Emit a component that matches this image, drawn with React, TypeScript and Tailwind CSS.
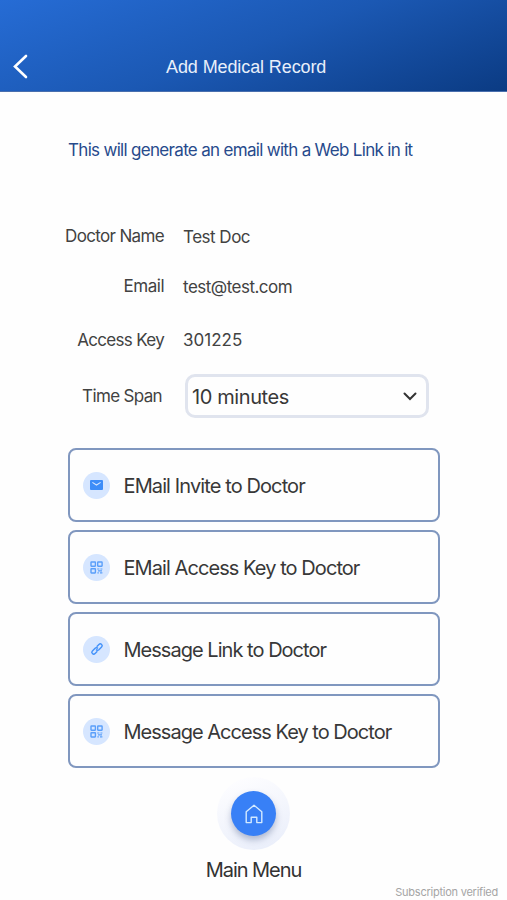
import React from "react";

interface FieldProps {
  label: React.ReactNode;
  className?: string;
  labelClass?: string;
  children?: React.ReactNode;
}

function Field({ label, className = "", labelClass = "", children }: FieldProps) {
  return (
    <div className={`${className} flex items-center`}>
      <p className={`${labelClass} text-right text-[17px] text-[#424242]`}>{label}</p>
      {children}
    </div>
  );
}

interface ActionProps {
  icon: React.ReactNode;
  text: string;
  className?: string;
}

function ActionButton({ icon, text, className = "" }: ActionProps) {
  return (
    <button className="flex h-[74px] w-full items-center rounded-lg border-2 border-[#8097bf] pl-[13px] text-left">
      <span className="flex h-[27px] w-[27px] items-center justify-center rounded-full bg-[#d6e6ff]">{icon}</span>
      <span className={`${className} ml-[13.5px] pt-0.5 text-[20px] whitespace-nowrap text-[#383838]`}>{text}</span>
    </button>
  );
}

function MailIcon() {
  return (
    <svg width="13" height="10" viewBox="0 0 13 10" fill="none">
      <rect width="13" height="10" rx="1" fill="#3d8df8" />
      <path d="M2.4 2.4 6.5 5l4.1-2.6" stroke="#d6e6ff" strokeWidth="1.1" />
    </svg>
  );
}

function QrIcon() {
  return (
    <svg width="13" height="13" viewBox="0 0 13 13" fill="none" stroke="#5a9ffa" strokeWidth="1.4">
      <rect x="1" y="1" width="4.4" height="4.2" rx="0.4" />
      <rect x="7.7" y="1" width="4.4" height="4.2" rx="0.4" />
      <rect x="1" y="7.8" width="4.4" height="4.2" rx="0.4" />
      <path d="M7.2 8h2.2M10.4 8h2M8 9.9h4M7.4 11.9h1.4M10 11.9h2.4" strokeWidth="1.2" />
    </svg>
  );
}

function LinkIcon() {
  return (
    <svg width="16" height="16" viewBox="0 0 16 16" fill="none" stroke="#4392fa" strokeWidth="1.4">
      <g transform="rotate(-45 8 8)">
        <path d="M6.6 9.9H3.4a1.9 1.9 0 0 1 0-3.8h3.8a1.9 1.9 0 0 1 1.8 2.2" />
        <path d="M9.4 6.1h3.2a1.9 1.9 0 0 1 0 3.8H8.8A1.9 1.9 0 0 1 7 7.7" />
      </g>
    </svg>
  );
}

export default function App() {
  return (
    <div className="flex h-[900px] w-[507px] flex-col overflow-hidden bg-[#fefefe] font-['Inter',sans-serif]">
      <header className="flex h-[92px] shrink-0 items-end border-b border-[#496fae] bg-[linear-gradient(160deg,#266cd5_0%,#1b58b3_50%,#0b3b83_100%)] pb-3 pl-[13px]">
        <svg width="15" height="25" viewBox="0 0 15 25" fill="none" stroke="#fff" strokeWidth="2.6" strokeLinecap="round">
          <path d="M13 2 2 12.5 13 23" />
        </svg>
        <h1 className="-mb-0.5 ml-[138px] font-['Liberation_Sans',sans-serif] text-[18px] leading-[27px] tracking-[-0.1px] text-[#e8effa]">
          Add Medical Record
        </h1>
      </header>

      <p className="mt-[46px] ml-[68px] text-[17px] leading-6 tracking-[-0.69px] whitespace-nowrap text-[#274a8c]">
        This will generate an email with a Web Link in it
      </p>

      <section className="mt-[62px] flex flex-col">
        <Field label="Doctor Name" className="h-6" labelClass="w-[164px] pt-px tracking-[-0.65px]">
          <p className="ml-[19px] pt-[3px] text-[17px] tracking-[-0.5px] text-[#424242]">Test Doc</p>
        </Field>
        <Field label="Email" className="mt-[26px] h-6" labelClass="w-[164px] pt-px tracking-[-0.5px]">
          <p className="ml-[19px] pt-[3px] text-[17px] tracking-[-0.52px] text-[#424242]">test@test.com</p>
        </Field>
        <Field label="Access Key" className="mt-[30px] h-6" labelClass="w-[164px] pt-px tracking-[-0.7px]">
          <p className="ml-[19px] pt-0.5 text-[17px] text-[#424242]">301225</p>
        </Field>
        <Field label="Time Span" className="mt-[22px] h-11" labelClass="w-[162px] pt-0.5 tracking-[-0.65px]">
          <button className="ml-[23px] flex h-11 w-[244px] items-center justify-between rounded-[10px] border-[3px] border-[#e0e4ee] pr-[9px] pl-1">
            <span className="pt-px text-[20px] tracking-[-0.4px] text-[#383838]">10 minutes</span>
            <svg width="14" height="9" viewBox="0 0 14 9" fill="none" stroke="#333" strokeWidth="2" strokeLinecap="round">
              <path d="m1.5 1.5 5.5 5.5 5.5-5.5" />
            </svg>
          </button>
        </Field>
      </section>

      <section className="mt-[30px] ml-[68px] flex w-[372px] flex-col gap-2">
        <ActionButton icon={<MailIcon />} text="EMail Invite to Doctor" className="tracking-[-0.89px]" />
        <ActionButton icon={<QrIcon />} text="EMail Access Key to Doctor" className="tracking-[-0.93px]" />
        <ActionButton icon={<LinkIcon />} text="Message Link to Doctor" className="tracking-[-0.97px]" />
        <ActionButton icon={<QrIcon />} text="Message Access Key to Doctor" className="tracking-[-0.98px]" />
      </section>

      <button className="mt-[9px] flex flex-col items-center">
        <span className="flex h-[73px] w-[73px] items-center justify-center rounded-full bg-[linear-gradient(160deg,#fdfdff_10%,#e8edfa_100%)]">
          <span className="flex h-[45px] w-[45px] items-center justify-center rounded-full bg-[#3880f6] shadow-[0_4px_6px_rgba(60,80,130,0.35)]">
            <svg width="18" height="20" viewBox="0 0 18 20" fill="none" stroke="#d4eaff" strokeWidth="1.4" strokeLinejoin="round">
              <path d="M1.2 7.8 9 1.2l7.8 6.6v10.8h-5v-5.4H6.2v5.4h-5z" />
            </svg>
          </span>
        </span>
        <span className="mt-1.5 text-[20px] leading-7 tracking-[-1.05px] text-[#333]">Main Menu</span>
      </button>

      <footer className="pr-[9px] text-right text-[11px] leading-4 tracking-[-0.24px] text-[#a5a5a5]">Subscription verified</footer>
    </div>
  );
}
